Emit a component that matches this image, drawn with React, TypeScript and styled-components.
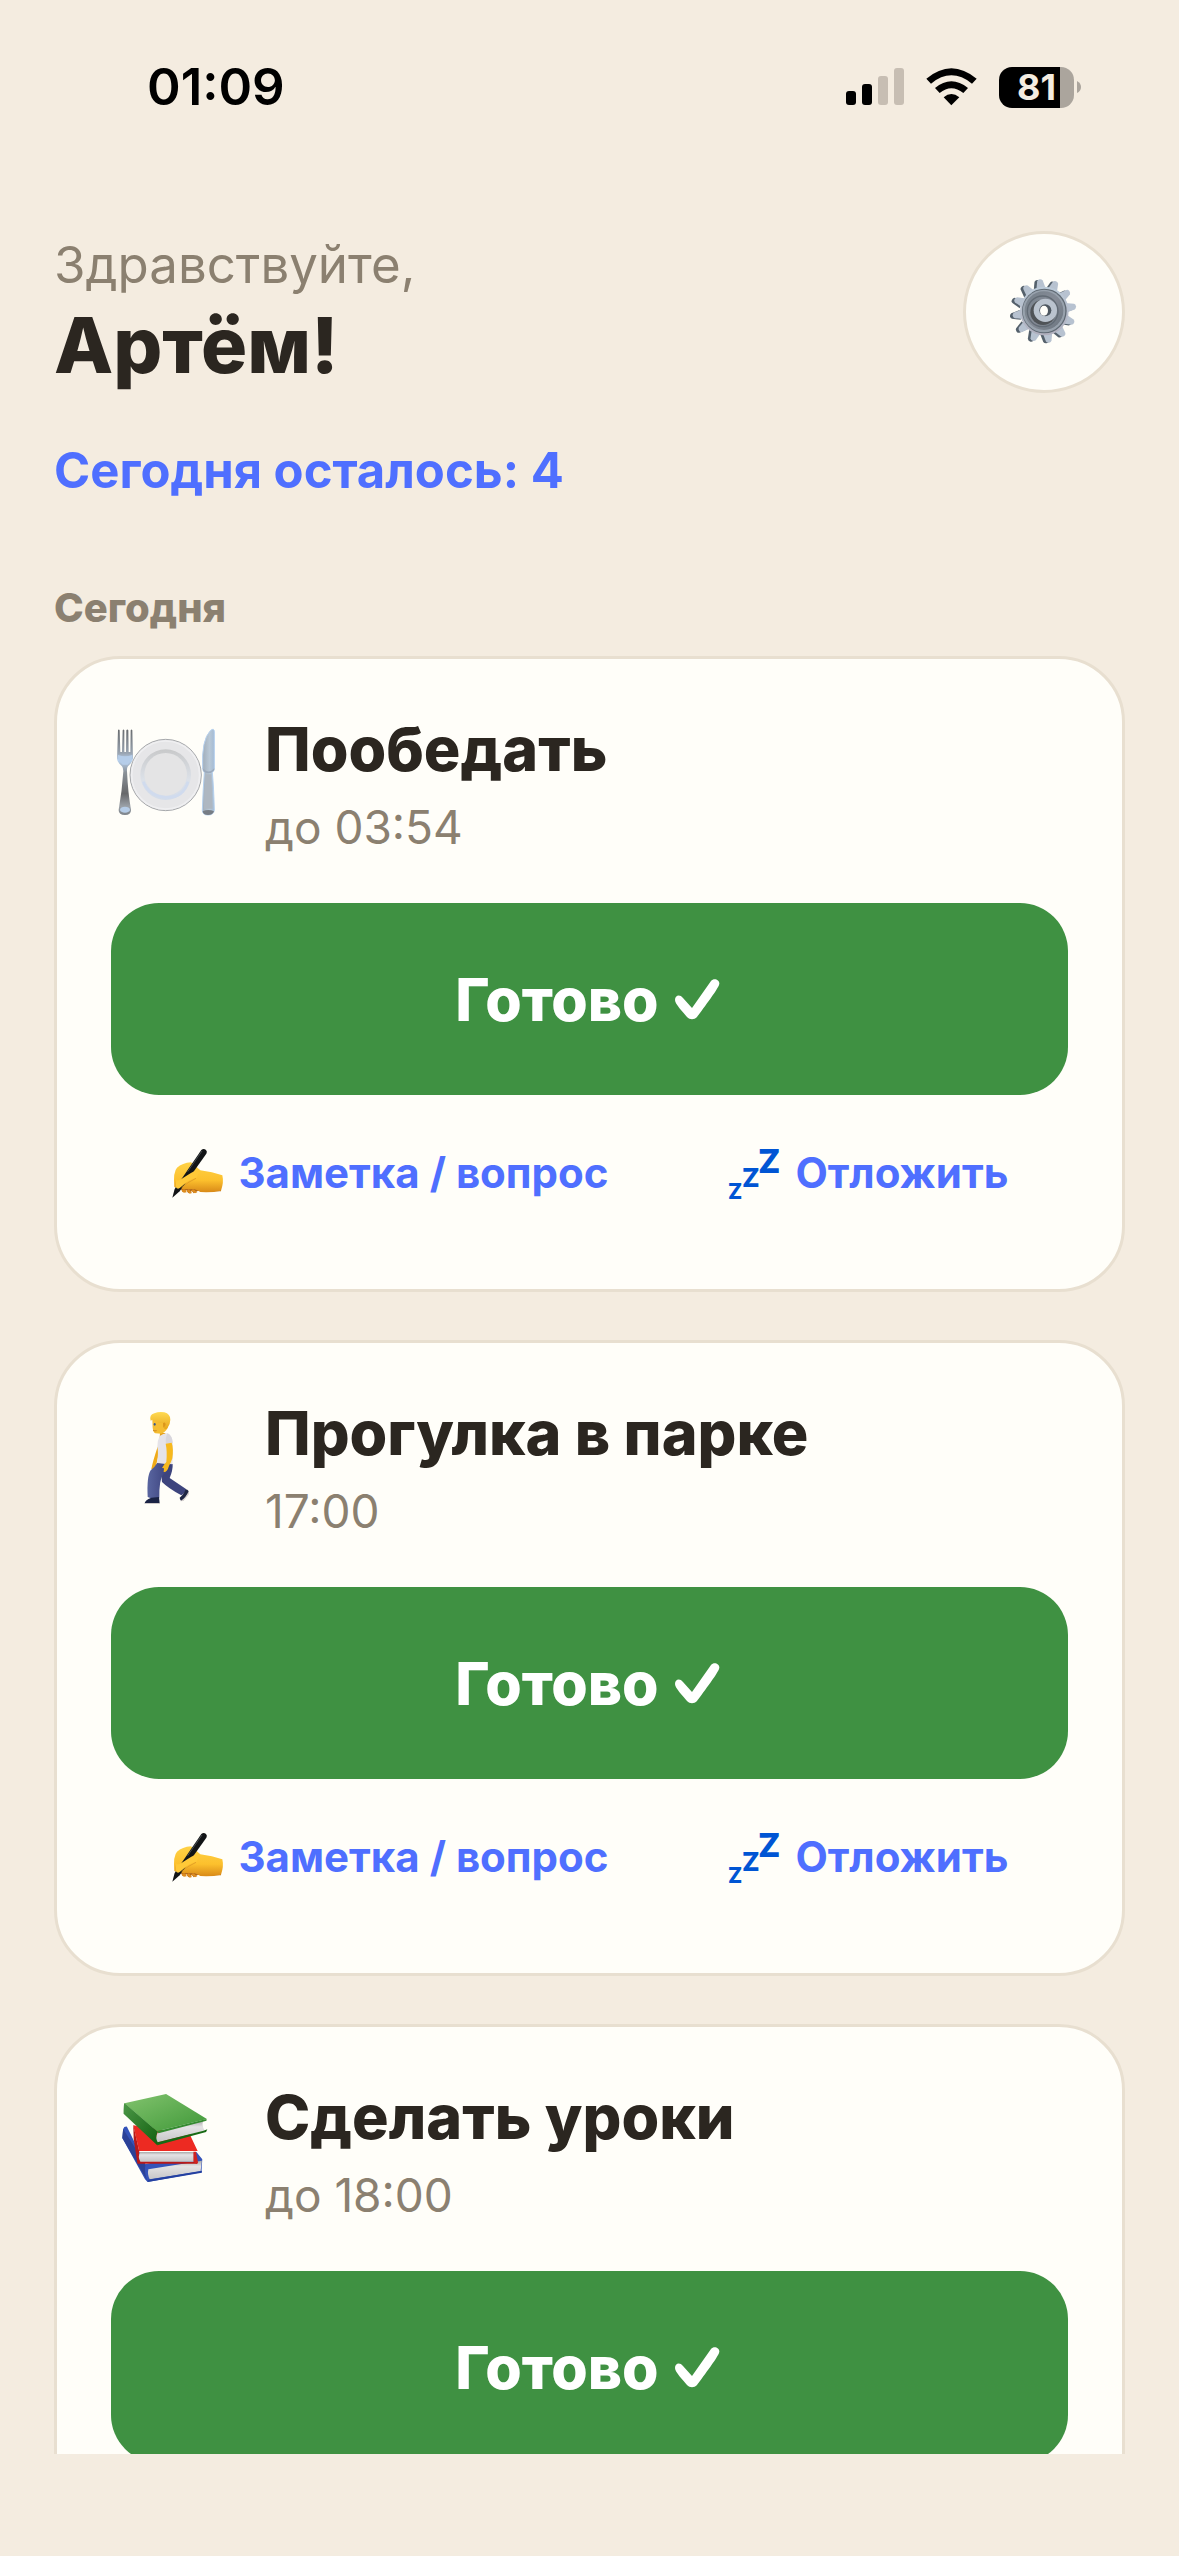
import { FC, ReactNode } from "react";
import styled, { createGlobalStyle } from "styled-components";

const colors = {
  page: "#f4ece0",
  card: "#fffef9",
  border: "#e8dfd0",
  text: "#2b2620",
  muted: "#8b8070",
  accent: "#4f6fff",
  done: "#3f9142",
};

const GlobalStyle = createGlobalStyle`
  * {
    box-sizing: border-box;
  }

  body {
    margin: 0;
    background: ${colors.page};
    color: ${colors.text};
    font-family: Inter, "Liberation Sans", sans-serif;
  }

  button {
    padding: 0;
    font-family: inherit;
    cursor: pointer;
  }

  svg {
    display: block;
    flex-shrink: 0;
  }
`;

const Screen = styled.div`
  display: flex;
  flex-direction: column;
  height: 100vh;
  padding-bottom: 102px;
`;

const StatusBar = styled.div`
  display: flex;
  justify-content: space-between;
  align-items: center;
  padding: 57px 98px 0px 147px;
  color: #000000;
`;

const Clock = styled.time`
  font-size: 51px;
  line-height: 60px;
  font-weight: 600;
`;

const StatusIcons = styled.div`
  display: flex;
  align-items: center;
  gap: 22px;
`;

const Battery = styled.div`
  display: flex;
  align-items: center;
  gap: 3px;
`;

const BatteryBody = styled.div<{ $level: number }>`
  display: flex;
  justify-content: center;
  align-items: center;
  width: 75px;
  height: 41px;
  border-radius: 13px;
  background: linear-gradient(
    to right,
    #000000 ${({ $level }) => $level}%,
    #aba59d ${({ $level }) => $level}%
  );
  color: ${colors.page};
  font-size: 36px;
  line-height: 41px;
  font-weight: 700;
`;

const Content = styled.main`
  flex: 1;
  min-height: 0;
  margin-top: 60px;
  padding: 54px 54px 0px;
  overflow-y: auto;
  scrollbar-width: none;
`;

const Header = styled.header`
  display: flex;
  justify-content: space-between;
  align-items: center;
`;

const Greeting = styled.p`
  margin: 0;
  color: ${colors.muted};
  font-size: 51px;
  line-height: 66px;
`;

const UserName = styled.h1`
  margin: 0;
  font-size: 77px;
  line-height: 94px;
  font-weight: 800;
`;

const SettingsButton = styled.button`
  display: flex;
  justify-content: center;
  align-items: center;
  width: 162px;
  height: 162px;
  border: 3px solid ${colors.border};
  border-radius: 50%;
  background: ${colors.card};
`;

const Remaining = styled.p`
  margin: 48px 0px 83px;
  color: ${colors.accent};
  font-size: 49px;
  line-height: 60px;
  font-weight: 700;
`;

const SectionTitle = styled.h2`
  margin: 0px 0px 25px;
  color: ${colors.muted};
  font-size: 40px;
  line-height: 47px;
  font-weight: 800;
`;

const TaskList = styled.div`
  display: flex;
  flex-direction: column;
  gap: 48px;
`;

const Card = styled.article`
  padding: 54px;
  border: 3px solid ${colors.border};
  border-radius: 66px;
  background: ${colors.card};
`;

const CardHead = styled.div`
  display: flex;
  gap: 46px;
  margin-bottom: 48px;
`;

const TaskTitle = styled.h3`
  margin: 0px 0px 14px;
  font-size: 61px;
  line-height: 72px;
  font-weight: 800;
`;

const TaskTime = styled.p`
  margin: 0;
  color: ${colors.muted};
  font-size: 46px;
  line-height: 56px;
`;

const DoneButton = styled.button`
  display: flex;
  justify-content: center;
  align-items: center;
  gap: 16px;
  width: 100%;
  height: 192px;
  border: none;
  border-radius: 48px;
  background: ${colors.done};
  color: #ffffff;
  font-size: 59px;
  font-weight: 800;
`;

const Actions = styled.div`
  display: flex;
  justify-content: space-around;
  height: 124px;
  margin-top: 16px;
`;

const ActionButton = styled.button`
  display: flex;
  align-items: center;
  gap: 14px;
  border: none;
  background: none;
  color: ${colors.accent};
  font-size: 42px;
  line-height: 52px;
  font-weight: 700;
`;

const SignalIcon = () => (
  <svg width="58" height="38" viewBox="0 0 58 38" aria-hidden="true">
    <rect x="0" y="23" width="10" height="14" rx="3" />
    <rect x="16" y="16" width="10" height="21" rx="3" />
    <rect x="32" y="8" width="10" height="29" rx="3" fill="#c7beb3" />
    <rect x="48" y="0" width="10" height="37" rx="3" fill="#c7beb3" />
  </svg>
);

const WifiIcon = () => (
  <svg width="51" height="38" viewBox="318 56 153 114" aria-hidden="true">
    <path d="M319 88Q394 25 470 88L456 103Q394 53 333 103Z" />
    <path d="M345 116Q394 76 444 116L430 131Q394 103 359 131Z" />
    <path d="M371 144Q394 124 418 144L394 168Z" />
  </svg>
);

const BatteryTip = () => (
  <svg width="4" height="12" viewBox="0 0 4 12" aria-hidden="true">
    <path d="M0 0Q4 2 4 6T0 12Z" fill="#aba59d" />
  </svg>
);

const GearIcon = () => {
  const teeth = Array.from({ length: 12 }, (_, i) => i * 30 - 8);
  const toothPath = "M298 238L304 212Q306 207 312 207T321 212L327 238Z";

  return (
    <svg width="72" height="72" viewBox="204 198 216 216" aria-hidden="true">
      <defs>
        <linearGradient id="gearBody" x1="0" y1="0" x2="0" y2="1">
          <stop offset="0" stopColor="#bccbd9" />
          <stop offset="1" stopColor="#b0afbd" />
        </linearGradient>
        <linearGradient id="gearDish" x1="0" y1="0" x2="1" y2="1">
          <stop offset="0" stopColor="#75808a" />
          <stop offset="0.5" stopColor="#858b96" />
          <stop offset="1" stopColor="#6a747e" />
        </linearGradient>
      </defs>
      <g fill="#54606b" transform="translate(-8 2)">
        {teeth.map((angle) => (
          <path key={angle} d={toothPath} transform={`rotate(${angle} 313 303)`} />
        ))}
      </g>
      <g fill="#b7c2d0">
        {teeth.map((angle) => (
          <path key={angle} d={toothPath} transform={`rotate(${angle} 313 303)`} />
        ))}
      </g>
      <circle cx="313" cy="303" r="73" fill="url(#gearBody)" />
      <circle cx="313" cy="303" r="67" fill="#606a74" />
      <circle cx="312" cy="303" r="64" fill="#98a2ad" />
      <circle cx="312" cy="302" r="58" fill="url(#gearDish)" />
      <circle cx="308" cy="304" r="46" fill="none" stroke="#626b75" strokeWidth="4" />
      <circle cx="309" cy="307" r="38" fill="#4f5357" />
      <circle cx="316" cy="301" r="35" fill="#bac3ce" />
      <circle cx="316" cy="301" r="18" fill="#4e5760" />
      <ellipse cx="312" cy="302" rx="12" ry="15" fill="#fffef9" />
    </svg>
  );
};

const PlateIcon = () => (
  <svg width="108" height="108" viewBox="33 9 324 324" aria-hidden="true">
    <defs>
      <linearGradient id="fork" x1="0" y1="0" x2="0" y2="1">
        <stop offset="0" stopColor="#686b6e" />
        <stop offset="0.28" stopColor="#9aa5b2" />
        <stop offset="0.36" stopColor="#b9d3f0" />
        <stop offset="0.5" stopColor="#8b9299" />
        <stop offset="0.75" stopColor="#67686a" />
        <stop offset="0.9" stopColor="#9ba1a8" />
        <stop offset="1" stopColor="#7d838a" />
      </linearGradient>
      <linearGradient id="blade" x1="0" y1="0" x2="1" y2="0">
        <stop offset="0" stopColor="#a1adb9" />
        <stop offset="0.6" stopColor="#b9c8d6" />
        <stop offset="1" stopColor="#a4bbd4" />
      </linearGradient>
      <linearGradient id="plateRim" x1="0" y1="0" x2="0" y2="1">
        <stop offset="0" stopColor="#c8c9ca" />
        <stop offset="0.6" stopColor="#dce1e8" />
        <stop offset="1" stopColor="#d3dcea" />
      </linearGradient>
    </defs>
    <path
      d="M54 60Q57 56 59 61L61 126H66L68 61Q70 56 73 61V126H78L79 61Q82 56 85 61L86 126H91L92 61Q95 56 97 61L99 146Q98 156 84 169Q80 174 81 184Q84 250 93 299Q94 314 75 315Q55 314 56 299Q66 245 70 184Q70 174 66 169Q51 156 51 146Z"
      fill="url(#fork)"
    />
    <path d="M54 135Q75 143 97 135Q97 150 83 164H68Q53 151 54 135Z" fill="#b5cde9" />
    <ellipse cx="75" cy="299" rx="15" ry="9" fill="#b5cce7" />
    <circle cx="197" cy="195" r="107" fill="#e6e6e8" stroke="#a6a8ab" strokeWidth="3" />
    <circle cx="197" cy="195" r="102" fill="none" stroke="#efeff1" strokeWidth="5" />
    <circle cx="197" cy="194" r="76" fill="url(#plateRim)" />
    <circle cx="197" cy="193" r="64" fill="#e4e4e5" />
    <path
      d="M130 215Q145 258 197 262T264 215"
      fill="none"
      stroke="#d0dbee"
      strokeWidth="8"
    />
    <path
      d="M308 174Q304 90 331 62Q343 52 343 66V176Q341 184 337 188Q341 230 343 301Q341 315 324 315T307 301Q309 240 313 188Q308 181 308 174Z"
      fill="url(#blade)"
      stroke="#b6d1ef"
      strokeWidth="3"
    />
    <path d="M316 193H334L338 296H312Z" fill="#aeb7c1" />
    <path d="M308 175Q326 194 343 175V181Q326 198 310 183Z" fill="#9caabc" />
    <path d="M308 304Q325 296 342 304Q339 315 324 315T308 304Z" fill="#777d85" />
  </svg>
);

const WalkerIcon = () => (
  <svg width="108" height="108" viewBox="-27 -9 324 324" aria-hidden="true">
    <defs>
      <linearGradient id="jeans" x1="0" y1="0" x2="1" y2="0">
        <stop offset="0" stopColor="#5965a0" />
        <stop offset="1" stopColor="#373d77" />
      </linearGradient>
      <linearGradient id="hair" x1="0" y1="0" x2="0" y2="1">
        <stop offset="0" stopColor="#ffda52" />
        <stop offset="1" stopColor="#e7a51a" />
      </linearGradient>
    </defs>
    <path d="M113 140L119 150L108 197Q105 210 94 207Q98 185 113 140Z" fill="#f0ab18" />
    <path
      d="M120 192H158Q159 210 149 234L198 267Q199 277 184 286Q145 265 126 246Z"
      fill="#3d447d"
    />
    <path
      d="M112 188L154 193Q151 211 129 224Q117 240 118 293Q100 300 83 291Q80 229 92 211Q106 199 112 188Z"
      fill="url(#jeans)"
    />
    <path d="M197 268Q209 270 205 281L188 303Q181 304 179 293Q191 285 197 268Z" fill="#1e2543" />
    <path d="M205 275Q210 278 206 284L190 303L181 304Q199 291 205 275Z" fill="#d8d2d0" />
    <path d="M94 293L117 291L119 310H74Q74 301 94 293Z" fill="#1a2345" />
    <path d="M74 309H119V312H74Z" fill="#cfcac9" />
    <path d="M120 99H136V112L119 115Z" fill="#e3a019" />
    <path
      d="M119 108Q131 99 143 100Q157 108 158 126Q161 158 157 193L111 189Q116 157 112 140Q112 121 119 108Z"
      fill="#e5e3e8"
    />
    <path d="M143 100Q157 108 158 128L138 131Q135 112 143 100Z" fill="#d8d6dc" />
    <path
      d="M137 131L155 128Q161 145 157 175Q153 187 147 198Q141 218 131 216L132 205L126 204Q133 191 139 186Q142 153 137 131Z"
      fill="#f7b91d"
    />
    <path
      d="M97 59L98 84Q100 99 106 100L124 101Q143 95 145 73L144 51L112 48Z"
      fill="#f5bd32"
    />
    <path
      d="M92 62Q87 44 103 40Q117 34 133 37Q151 42 151 59Q151 73 142 85Q133 93 130 77L129 69H115L109 62Q100 57 92 62Z"
      fill="url(#hair)"
    />
    <path d="M129 70Q134 64 137 72Q136 81 130 83Z" fill="#db961c" />
    <ellipse cx="104" cy="73" rx="3" ry="4" fill="#3b5a8f" />
    <path d="M99 91Q105 94 110 92" fill="none" stroke="#bb6f18" strokeWidth="2" />
  </svg>
);

const BooksIcon = () => (
  <svg width="108" height="108" viewBox="0 0 108 108" aria-hidden="true">
    <defs>
      <linearGradient id="greenCover" x1="0" y1="0" x2="1" y2="1">
        <stop offset="0" stopColor="#82c36e" />
        <stop offset="1" stopColor="#3f9838" />
      </linearGradient>
      <linearGradient id="greenSpine" x1="0" y1="0" x2="1" y2="1">
        <stop offset="0" stopColor="#4b9747" />
        <stop offset="1" stopColor="#12600f" />
      </linearGradient>
      <linearGradient id="pages" x1="0" y1="0" x2="0" y2="1">
        <stop offset="0" stopColor="#a9a9a9" />
        <stop offset="0.3" stopColor="#e4e3e4" />
        <stop offset="1" stopColor="#c6c5c7" />
      </linearGradient>
    </defs>
    <g transform="translate(-11 -11) scale(0.4209 0.3333)">
      <path d="M55 177Q57 169 64 170L108 283L229 246L243 268L241 307L113 336L107 328L53 204Z" fill="#3453b9" />
      <path d="M55 177L108 283Q104 310 113 334L53 204Z" fill="#2b4196" />
      <path d="M115 298L242 272L239 304L118 328Q112 313 115 298Z" fill="url(#pages)" />
      <path d="M115 329L242 302V308L113 336Z" fill="#2440a0" />
      <path d="M79 166L93 243H232L212 190L150 180Z" fill="#ed2a22" />
      <path d="M79 164L93 243V271L229 276L232 281H89L80 206Z" fill="#b81918" />
      <path d="M95 246H223V275H96Q89 261 95 246Z" fill="url(#pages)" />
      <path d="M222 245H228L233 278L229 282L222 275Z" fill="#d02320" />
      <path d="M58 100L157 72L254 147L135 184Z" fill="url(#greenCover)" />
      <path d="M58 99Q56 104 56 131L136 226L139 216Q131 204 137 185Z" fill="url(#greenSpine)" />
      <path d="M137 188L246 151Q240 166 249 182L137 217Q131 203 137 188Z" fill="url(#pages)" />
      <path d="M135 184L253 147V152L139 190Z" fill="#348b30" />
      <path d="M137 217L246 182L255 178L252 186L136 226Z" fill="#176914" />
    </g>
  </svg>
);

const CheckIcon = () => (
  <svg width="49" height="42" viewBox="0 0 49 42" aria-hidden="true">
    <path
      d="M0 22C0 17 5 16 8 20L17 30L36 3C39 -1 46 2 44 7C43 11 25 35 22 39C19 42 15 42 12 39C8 34 0 26 0 22Z"
      fill="#ffffff"
    />
  </svg>
);

const WritingIcon = () => (
  <svg width="54" height="54" viewBox="33 48 162 162" aria-hidden="true">
    <defs>
      <linearGradient id="hand" x1="0" y1="0" x2="0" y2="1">
        <stop offset="0" stopColor="#ffd246" />
        <stop offset="0.6" stopColor="#fcc02d" />
        <stop offset="1" stopColor="#d98a18" />
      </linearGradient>
    </defs>
    <path d="M62 172L72 187L82 180L88 190L99 183L104 190L116 183L186 184V174L120 160Z" fill="#ad641a" />
    <path
      d="M46 171Q42 125 54 113Q70 99 96 97L124 121Q160 125 190 136Q195 157 186 182Q160 188 124 186Q105 174 96 178L62 177Z"
      fill="url(#hand)"
    />
    <path d="M74 178Q80 176 83 187L75 188Q68 187 68 180ZM90 178L99 189L92 191L82 182ZM102 177L115 187L108 190L96 182Z" fill="#dd8c1f" />
    <path
      d="M127 60Q134 54 141 60Q146 65 142 71L62 184L40 203L47 177Z"
      fill="#121416"
    />
    <path d="M129 63L86 125" fill="none" stroke="#454a4d" strokeWidth="3" />
    <path
      d="M52 147Q54 155 66 148Q86 134 97 128Q108 120 122 124L112 143Q100 144 84 156L65 172Q56 181 50 171Z"
      fill="#ffc938"
    />
    <path d="M68 173Q90 154 111 145" fill="none" stroke="#e3a027" strokeWidth="3" />
  </svg>
);

const ZzzIcon = () => (
  <svg
    width="54"
    height="72"
    viewBox="0 -9 54 72"
    fill="#0055d4"
    fontWeight="800"
    aria-hidden="true"
  >
    <text x="1" y="53" fontSize="21">
      Z
    </text>
    <text x="15" y="41" fontSize="26">
      Z
    </text>
    <text x="31" y="27" fontSize="33">
      Z
    </text>
  </svg>
);

interface TaskCardProps {
  icon: ReactNode;
  title: string;
  time: string;
}

const TaskCard: FC<TaskCardProps> = ({ icon, title, time }) => (
  <Card>
    <CardHead>
      {icon}
      <div>
        <TaskTitle>{title}</TaskTitle>
        <TaskTime>{time}</TaskTime>
      </div>
    </CardHead>
    <DoneButton type="button">
      Готово
      <CheckIcon />
    </DoneButton>
    <Actions>
      <ActionButton type="button">
        <WritingIcon />
        Заметка / вопрос
      </ActionButton>
      <ActionButton type="button">
        <ZzzIcon />
        Отложить
      </ActionButton>
    </Actions>
  </Card>
);

const App = () => (
  <Screen>
    <GlobalStyle />
    <StatusBar>
      <Clock>01:09</Clock>
      <StatusIcons>
        <SignalIcon />
        <WifiIcon />
        <Battery>
          <BatteryBody $level={81}>81</BatteryBody>
          <BatteryTip />
        </Battery>
      </StatusIcons>
    </StatusBar>
    <Content>
      <Header>
        <div>
          <Greeting>Здравствуйте,</Greeting>
          <UserName>Артём!</UserName>
        </div>
        <SettingsButton type="button" aria-label="Настройки">
          <GearIcon />
        </SettingsButton>
      </Header>
      <Remaining>Сегодня осталось: 4</Remaining>
      <SectionTitle>Сегодня</SectionTitle>
      <TaskList>
        <TaskCard icon={<PlateIcon />} title="Пообедать" time="до 03:54" />
        <TaskCard icon={<WalkerIcon />} title="Прогулка в парке" time="17:00" />
        <TaskCard icon={<BooksIcon />} title="Сделать уроки" time="до 18:00" />
      </TaskList>
    </Content>
  </Screen>
);

export default App;
